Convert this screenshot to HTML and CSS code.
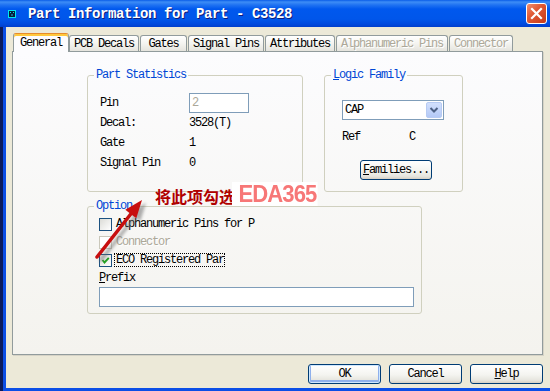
FILE: index.html
```html
<!DOCTYPE html>
<html lang="en">
<head>
    <meta charset="UTF-8">
    <meta name="viewport" content="width=device-width, initial-scale=1.0">
    <title>Part Information for Part - C3528</title>
    <link rel="stylesheet" href="styles.css">
</head>
<body>
<div class="window">
    <div class="titlebar">
        <svg class="app-icon" width="8" height="8" viewBox="0 0 8 8">
            <rect x="0" y="0" width="8" height="8" fill="#00e8f0"/>
            <rect x="1" y="1" width="6" height="6" fill="#06203a"/>
            <rect x="2" y="2" width="1" height="1" fill="#00e8f0"/>
            <rect x="5" y="2" width="1" height="1" fill="#00e8f0"/>
            <rect x="3" y="4" width="2" height="2" fill="#1a6a8a"/>
        </svg>
        <span class="title">Part Information for Part - C3528</span>
        <span class="close-btn">
            <svg width="19" height="19" viewBox="0 0 19 19">
                <path d="M5 5 L14 14 M14 5 L5 14" stroke="#fff" stroke-width="2.2" stroke-linecap="square"/>
            </svg>
        </span>
    </div>

    <div class="frame">
        <div class="client">
            <div class="tabs">
                <div class="tab active">General</div>
                <div class="tab">PCB Decals</div>
                <div class="tab">Gates</div>
                <div class="tab">Signal Pins</div>
                <div class="tab">Attributes</div>
                <div class="tab disabled">Alphanumeric Pins</div>
                <div class="tab disabled">Connector</div>
            </div>

            <div class="panel">
                <div class="top-row">
                    <fieldset class="group stats">
                        <legend>Part Statistics</legend>
                        <div class="group-body stats-body">
                            <div class="stat-row">
                                <span class="stat-label">Pin</span>
                                <span class="textbox pin-box">2</span>
                            </div>
                            <div class="stat-row">
                                <span class="stat-label">Decal:</span>
                                <span>3528(T)</span>
                            </div>
                            <div class="stat-row">
                                <span class="stat-label">Gate</span>
                                <span>1</span>
                            </div>
                            <div class="stat-row">
                                <span class="stat-label">Signal Pin</span>
                                <span>0</span>
                            </div>
                        </div>
                    </fieldset>

                    <fieldset class="group logic">
                        <legend><u>L</u>ogic Family</legend>
                        <div class="group-body logic-body">
                            <div class="combo">
                                <span>CAP</span>
                                <span class="combo-btn">
                                    <svg width="14" height="14" viewBox="0 0 14 14">
                                        <path d="M3.5 5 L7 8.5 L10.5 5" fill="none" stroke="#4d6185" stroke-width="2"/>
                                    </svg>
                                </span>
                            </div>
                            <div class="ref-row">
                                <span class="ref-label">Ref</span>
                                <span>C</span>
                            </div>
                            <button class="btn families"><u>F</u>amilies...</button>
                        </div>
                    </fieldset>
                </div>

                <fieldset class="group option">
                    <legend>Option</legend>
                    <div class="group-body option-body">
                        <div class="check-row">
                            <span class="checkbox"></span>
                            <span>Alphanumeric Pins for P</span>
                        </div>
                        <div class="check-row disabled">
                            <span class="checkbox"></span>
                            <span>Connector</span>
                        </div>
                        <div class="check-row">
                            <span class="checkbox checked">
                                <svg width="11" height="11" viewBox="0 0 11 11">
                                    <path d="M2.5 5 L4.5 7.5 L8.8 2.8" fill="none" stroke="#21a121" stroke-width="1.9"/>
                                </svg>
                            </span>
                            <span class="focus">ECO Registered Par</span>
                        </div>
                        <div class="field-label"><u>P</u>refix</div>
                        <div class="textbox prefix"></div>
                    </div>
                </fieldset>
            </div>

            <div class="buttons">
                <button class="btn default">OK</button>
                <button class="btn">Cancel</button>
                <button class="btn"><u>H</u>elp</button>
            </div>
        </div>
    </div>

    <!-- annotation pasted over the screenshot -->
    <svg class="arrow" width="64" height="80" viewBox="0 0 64 80">
        <defs>
            <filter id="soft" x="-20%" y="-20%" width="140%" height="140%">
                <feGaussianBlur stdDeviation="1.4"/>
            </filter>
        </defs>
        <g transform="translate(4 3)" fill="#6e6e6e" stroke="#6e6e6e" opacity="0.55" filter="url(#soft)">
            <path d="M7 62 L40.8 19" stroke-width="3.5" stroke-linecap="round"/>
            <path d="M52 5 L46.3 23.3 L35.3 14.7 Z" stroke="none"/>
        </g>
        <path d="M7 62 L40.8 19" stroke="#c80f0f" stroke-width="3.5" stroke-linecap="round"/>
        <path d="M52 5 L46.3 23.3 L35.3 14.7 Z" fill="#c80f0f"/>
    </svg>
    <div class="note">将此项勾选</div>
    <div class="watermark">EDA365</div>
</div>
</body>
</html>
```

FILE: styles.css
```css
body {
    margin: 0;
    background: #ece9d8;
    font: 12px/14px "Liberation Mono", "Noto Sans CJK SC", monospace;
    letter-spacing: -1.2px;
    color: #000;
}
.window {
    position: relative;
    width: 550px;
    height: 391px;
    display: flex;
    flex-direction: column;
    background: #ece9d8;
    overflow: hidden;
}

/* title bar */
.titlebar {
    flex: none;
    height: 27px;
    display: flex;
    align-items: center;
    padding-left: 8px;
    background: linear-gradient(#0a5de8 0, #3d8df6 2px, #1f72f2 5px, #0058ee 9px, #0056ea 19px, #004ade 24px, #003ecb 27px);
}
.app-icon {
    margin-right: 12px;
    flex: none;
}
.title {
    font: bold 14px/16px "Liberation Mono", monospace;
    letter-spacing: -0.4px;
    color: #fff;
    text-shadow: 1px 1px 0 #0f1c7a;
}
.close-btn {
    margin-left: auto;
    margin-right: 3px;
    width: 21px;
    height: 21px;
    box-sizing: border-box;
    display: flex;
    align-items: center;
    justify-content: center;
    border: 1px solid #fff;
    border-radius: 3px;
    background: linear-gradient(135deg, #f09070, #e05a36 40%, #c53a18);
}

/* window frame */
.frame {
    flex: 1;
    display: flex;
    border-left: 3px solid #0a1a5c;
}
.client {
    flex: 1;
    display: flex;
    flex-direction: column;
    border-left: 3px solid #0b4ee6;
    border-bottom: 3px solid #0b4ee6;
    padding: 6px 7px 4px 6px;
}

/* tabs */
.tabs {
    display: flex;
    align-items: flex-end;
    height: 18px;
    margin-left: 1px;
    position: relative;
    z-index: 1;
}
.tab {
    box-sizing: border-box;
    height: 16px;
    min-width: 47px;
    padding: 1px 4px 0;
    margin-right: 1px;
    border: 1px solid #919b9c;
    border-bottom: none;
    border-radius: 3px 3px 0 0;
    background: linear-gradient(#fff, #f4f4f0 50%, #e5e4dd);
    text-align: center;
    white-space: nowrap;
}
.tab.active {
    height: 19px;
    margin-bottom: -1px;
    margin-right: 0;
    padding: 2px 6px 0;
    border-top-color: #e68b2c;
    box-shadow: inset 0 2px 0 #ffc83c;
    background: #fcfcfe;
}
.tab.disabled {
    color: #aca899;
    text-shadow: 1px 1px 0 #fff;
}

/* tab page */
.panel {
    box-sizing: border-box;
    height: 304px;
    padding: 16px 0 0 74px;
    border: 1px solid #919b9c;
    background: linear-gradient(#fcfcfe, #f4f3ee);
    box-shadow: 1px 1px 0 #d6d3c6;
}
.top-row {
    display: flex;
    gap: 21px;
}
.group {
    box-sizing: border-box;
    margin: 0;
    padding: 0;
    min-width: 0;
    border: 1px solid #d0d0bf;
    border-radius: 3px;
}
.group legend {
    margin-left: 6px;
    padding: 0 2px;
    line-height: 14px;
    color: #0046d5;
}
.stats {
    width: 216px;
}
.logic {
    width: 139px;
}
.option {
    width: 335px;
    margin-top: 7px;
}

.stats-body {
    padding: 11px 0 18px 12px;
}
.stat-row {
    display: flex;
    align-items: center;
    height: 20px;
}
.stat-label {
    width: 89px;
}
.textbox {
    box-sizing: border-box;
    height: 20px;
    border: 1px solid #7f9db9;
    background: #fff;
    padding: 0 2px;
    line-height: 18px;
}
.pin-box {
    width: 60px;
    color: #aca899;
}

.logic-body {
    padding: 18px 0 11px 17px;
}
.combo {
    box-sizing: border-box;
    width: 102px;
    height: 20px;
    display: flex;
    align-items: center;
    padding: 0 1px 0 2px;
    border: 1px solid #7f9db9;
    background: #fff;
}
.combo-btn {
    margin-left: auto;
    box-sizing: border-box;
    width: 16px;
    height: 16px;
    display: flex;
    align-items: center;
    justify-content: center;
    border: 1px solid #b7cbf3;
    border-radius: 2px;
    background: linear-gradient(#d2e0fd, #b4c9f6);
}
.ref-row {
    display: flex;
    align-items: center;
    height: 18px;
    margin-top: 8px;
}
.ref-label {
    width: 67px;
}

.option-body {
    padding: 2px 0 6px 11px;
}
.check-row {
    display: flex;
    align-items: center;
    height: 18px;
}
.checkbox {
    flex: none;
    box-sizing: border-box;
    width: 13px;
    height: 13px;
    margin-right: 4px;
    border: 1px solid #1c5180;
    background: linear-gradient(135deg, #dcdcd7, #fff);
    display: flex;
}
.checkbox.checked {
    margin-right: 3px;
}
.check-row.disabled {
    color: #aca899;
    text-shadow: 1px 1px 0 #fff;
}
.check-row.disabled .checkbox {
    border-color: #cac8bb;
    background: #fff;
}
.focus {
    padding-left: 1px;
    line-height: 12px;
    outline: 1px dotted #000;
}
.field-label {
    height: 18px;
    line-height: 18px;
}
.prefix {
    width: 315px;
}

/* buttons */
.btn {
    box-sizing: border-box;
    width: 73px;
    height: 20px;
    padding: 0;
    border: 1px solid #003c74;
    border-radius: 3px;
    background: linear-gradient(#fff, #f4f4f0 55%, #e6e5de 85%, #d6d0c5);
    font: inherit;
    letter-spacing: inherit;
    color: #000;
}
.families {
    width: 72px;
    margin: 14px 0 0 18px;
}
.btn.default {
    box-shadow: inset 0 0 0 1px #cee7ff, inset 0 -1px 0 2px #8fb0ec;
}
.buttons {
    display: flex;
    justify-content: flex-end;
    gap: 8px;
    margin-top: 9px;
}

/* red note pasted on the picture */
.arrow {
    position: absolute;
    left: 90px;
    top: 195px;
}
.note {
    position: absolute;
    left: 155px;
    top: 188px;
    font: bold 16px/16px "Noto Sans CJK SC", sans-serif;
    letter-spacing: 0;
    color: #b00000;
}
.watermark {
    position: absolute;
    left: 232px;
    top: 182px;
    padding: 0 1px 0 7px;
    background: #fff;
    font: bold 24px/24px "Liberation Sans", sans-serif;
    letter-spacing: -1px;
    color: #f77777;
    transform: scaleX(0.92);
    transform-origin: left top;
}
```
